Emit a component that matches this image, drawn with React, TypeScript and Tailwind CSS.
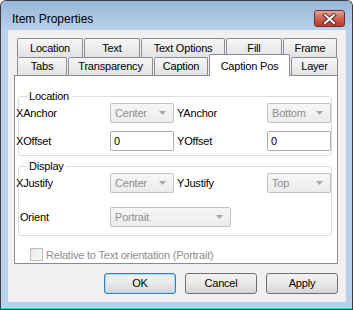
import React from 'react';

const topTabs = [
  { label: 'Location', w: 'w-[66px]' },
  { label: 'Text', w: 'w-[56px]' },
  { label: 'Text Options', w: 'w-[84px]' },
  { label: 'Fill', w: 'w-[56px]' },
  { label: 'Frame', w: 'w-[54px]' },
];

const frontTabs = [
  { label: 'Tabs', w: 'w-[50px]' },
  { label: 'Transparency', w: 'w-[85px]' },
  { label: 'Caption', w: 'w-[54px]' },
  { label: 'Caption Pos', w: 'w-[81px]', active: true },
  { label: 'Layer', w: 'w-[47px]' },
];

function Combo({ value, w = 'w-[64px]' }: { value: string; w?: string }) {
  return (
    <div
      className={`${w} h-[20px] flex items-center justify-between pl-[4px] pr-[7px] rounded-[2px] border border-[#c3c3c3] bg-gradient-to-b from-[#f6f6f6] to-[#ececec] text-[#8e8e8e]`}
    >
      <span>{value}</span>
      <svg width="7" height="4" viewBox="0 0 7 4">
        <polygon points="0,0 7,0 3.5,4" fill="#a6a6a6" />
      </svg>
    </div>
  );
}

function TextBox({ value }: { value: string }) {
  return (
    <div className="w-[64px] h-[20px] flex items-center pl-[3px] rounded-[2px] border border-[#abadb3] border-t-[#a3a7ae] bg-white">
      {value}
    </div>
  );
}

function Group({ title, children, h }: { title: string; children: React.ReactNode; h: string }) {
  return (
    <div className={`relative ml-[3px] mr-[5px] ${h} rounded-[3px] border border-[#d5dfe5]`}>
      <div className="absolute -top-[7px] left-[8px] px-[2px] bg-white leading-[13px]">{title}</div>
      <div className="-ml-[3px]">{children}</div>
    </div>
  );
}

function Button({ label, primary }: { label: string; primary?: boolean }) {
  return (
    <div
      className={`w-[72px] h-[21px] flex items-center justify-center rounded-[3px] border bg-gradient-to-b from-[#f2f2f2] via-[#e9e9e9] to-[#d4d4d4] ${
        primary ? 'border-[#3c7fb1] shadow-[inset_0_0_0_1px_#a6dcf5]' : 'border-[#707070]'
      }`}
    >
      {label}
    </div>
  );
}

export default function App() {
  return (
    <div className="w-[354px] h-[310px] bg-white overflow-hidden font-['Liberation_Sans',Arial,sans-serif] text-[11px] tracking-[-0.2px] text-black">
      <div className="w-[353px] h-[310px] flex flex-col rounded-t-[6px] border border-b-0 border-[#3a3d42] bg-[#b9d1ea] overflow-hidden">
        {/* Title bar */}
        <div className="h-[29px] shrink-0 flex items-start justify-between bg-gradient-to-b from-[#9ab6d7] to-[#bad1ea] pl-[11px] pr-[7px]">
          <div className="mt-[10px] text-[12px] leading-[16px] tracking-normal text-black">Item Properties</div>
          <div className="mt-[9px] w-[31px] h-[17px] rounded-[3px] border border-[#6e2c2c] bg-gradient-to-b from-[#e6a597] via-[#cc6454] to-[#b63a2c] flex items-center justify-center">
            <svg width="15" height="12" viewBox="0 0 15 12">
              <path d="M3 2 L12 10 M12 2 L3 10" stroke="#5a2a2a" strokeWidth="4" strokeLinecap="square" />
              <path d="M3 2 L12 10 M12 2 L3 10" stroke="#ffffff" strokeWidth="2" strokeLinecap="square" />
            </svg>
          </div>
        </div>

        {/* Client area */}
        <div className="mx-[7px] mr-[6px] h-[272px] shrink-0 bg-[#f0f0f0] flex flex-col pt-[8px] pl-[6px] pr-[8px]">
          {/* Tab rows */}
          <div className="flex gap-[1px] pl-[3px] h-[19px]">
            {topTabs.map((t) => (
              <div
                key={t.label}
                className={`${t.w} h-[19px] flex items-center justify-center border border-b-0 border-[#898c95] rounded-t-[2px] bg-gradient-to-b from-[#f6f6f6] to-[#e3e3e3]`}
              >
                {t.label}
              </div>
            ))}
          </div>
          <div className="flex items-end gap-[1px] pl-[3px] h-[18px]">
            {frontTabs.map((t) =>
              t.active ? (
                <div
                  key={t.label}
                  className={`${t.w} relative z-10 h-[22px] -mb-[1px] flex items-start justify-center pt-[3px] border border-b-0 border-[#898c95] rounded-t-[2px] bg-white`}
                >
                  {t.label}
                </div>
              ) : (
                <div
                  key={t.label}
                  className={`${t.w} h-[18px] flex items-center justify-center border border-b-0 border-[#898c95] rounded-t-[2px] bg-gradient-to-b from-[#f6f6f6] to-[#e3e3e3]`}
                >
                  {t.label}
                </div>
              )
            )}
          </div>

          {/* Tab panel */}
          <div className="h-[189px] border border-[#898c95] bg-white flex flex-col pt-[20px]">
            <Group title="Location" h="h-[60px]">
              <div className="flex flex-col gap-[8px] pt-[6px]">
                <div className="flex items-center">
                  <div className="w-[94px]">XAnchor</div>
                  <Combo value="Center" />
                  <div className="w-[90px] ml-[3px]">YAnchor</div>
                  <Combo value="Bottom" />
                </div>
                <div className="flex items-center">
                  <div className="w-[94px]">XOffset</div>
                  <TextBox value="0" />
                  <div className="w-[90px] ml-[3px]">YOffset</div>
                  <TextBox value="0" />
                </div>
              </div>
            </Group>

            <div className="h-[10px]" />

            <Group title="Display" h="h-[70px]">
              <div className="flex flex-col gap-[14px] pt-[6px]">
                <div className="flex items-center">
                  <div className="w-[94px]">XJustify</div>
                  <Combo value="Center" />
                  <div className="w-[90px] ml-[3px]">YJustify</div>
                  <Combo value="Top" />
                </div>
                <div className="flex items-center">
                  <div className="w-[94px] pl-[4px]">Orient</div>
                  <Combo value="Portrait" w="w-[121px]" />
                </div>
              </div>
            </Group>

            <div className="mt-[11px] ml-[15px] flex items-center gap-[3px] text-[#8e8e8e]">
              <div className="w-[13px] h-[13px] border border-[#bcbcbc] bg-gradient-to-br from-[#ececec] to-[#f8f8f8]" />
              <span>Relative to Text orientation (Portrait)</span>
            </div>
          </div>

          {/* Buttons */}
          <div className="mt-[9px] flex justify-end gap-[9px]">
            <Button label="OK" primary />
            <Button label="Cancel" />
            <Button label="Apply" />
          </div>
        </div>

        <div className="h-[6px] shrink-0" />
        <div className="h-[1px] shrink-0 bg-[#3fd0e0]" />
        <div className="h-[1px] shrink-0 bg-[#3a3d42]" />
      </div>
    </div>
  );
}
